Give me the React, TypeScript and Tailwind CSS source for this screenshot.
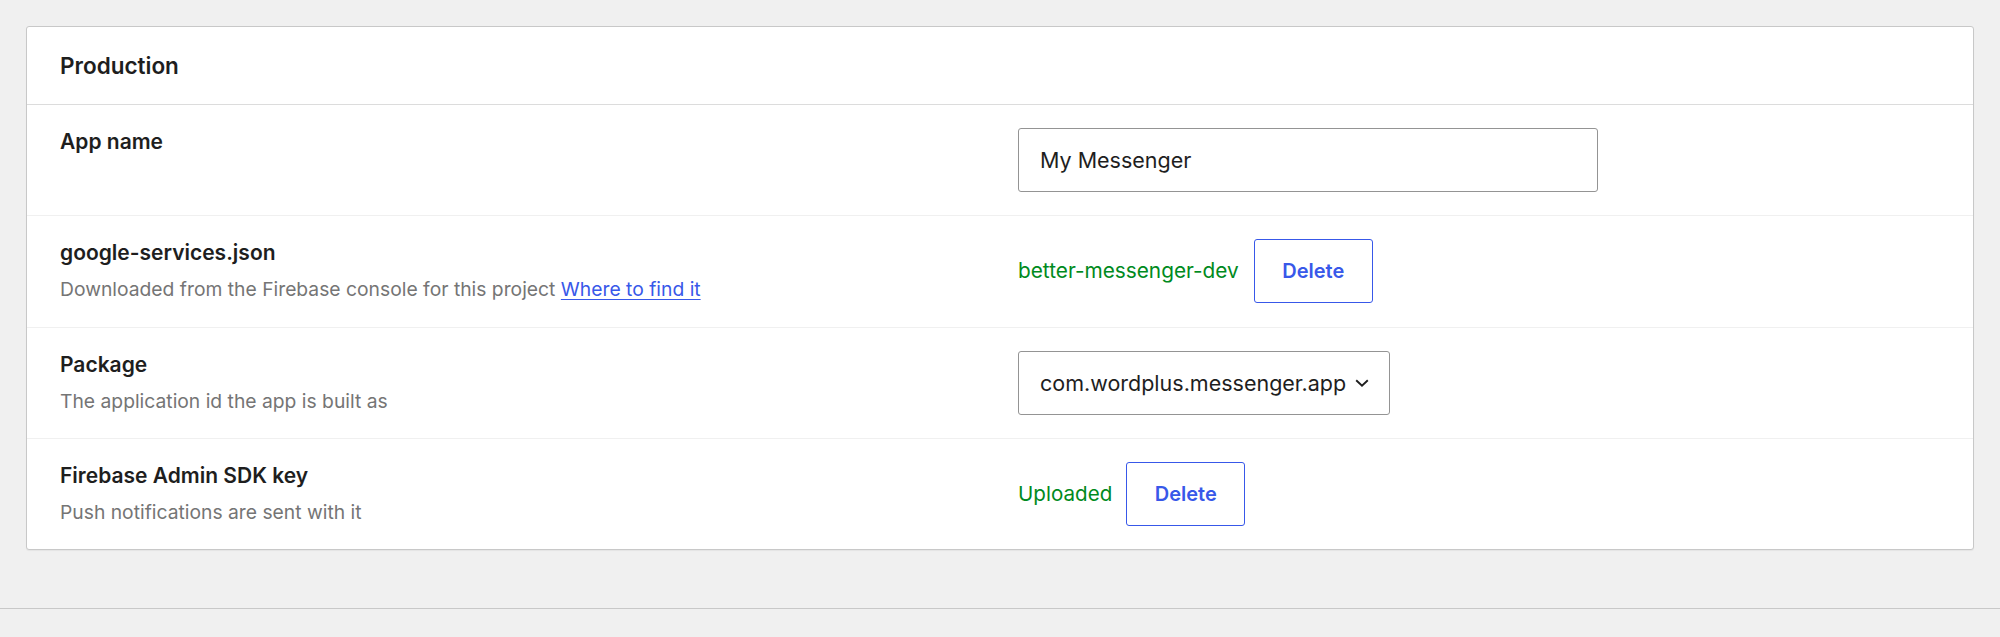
import React from "react";

const rows = [
  { id: "name", title: "App name" },
  { id: "services", title: "google-services.json" },
  { id: "package", title: "Package", hint: "The application id the app is built as" },
  { id: "admin", title: "Firebase Admin SDK key", hint: "Push notifications are sent with it" },
];

function DeleteButton() {
  return (
    <button className="h-[64px] w-[119px] rounded-[3px] border border-[#3858e9] bg-white text-[20px] font-semibold text-[#3858e9]">
      Delete
    </button>
  );
}

function Control({ id }: { id: string }) {
  if (id === "name") {
    return (
      <input
        defaultValue="My Messenger"
        className="h-[64px] w-[580px] rounded-[3px] border border-[#949494] bg-white px-[21px] text-[21.5px] text-[#1e1e1e] outline-none"
      />
    );
  }
  if (id === "services") {
    return (
      <div className="flex items-center gap-[15px]">
        <span className="text-[20.8px] text-[#008a20]">better-messenger-dev</span>
        <DeleteButton />
      </div>
    );
  }
  if (id === "package") {
    return (
      <div className="flex h-[64px] items-center rounded-[3px] border border-[#949494] bg-white pl-[21px] pr-[20px] text-[21.5px] text-[#1e1e1e]">
        <span>com.wordplus.messenger.app</span>
        <svg className="ml-[9px] h-[8px] w-[14px]" viewBox="0 0 14 8" fill="none">
          <path d="M1.2 1.2 L7 6.6 L12.8 1.2" stroke="#1e1e1e" strokeWidth="1.9" />
        </svg>
      </div>
    );
  }
  return (
    <div className="flex items-center gap-[14px]">
      <span className="text-[20.6px] text-[#008a20]">Uploaded</span>
      <DeleteButton />
    </div>
  );
}

export default function App() {
  return (
    <div className="min-h-[637px] bg-[#f0f0f0] pt-[26px] font-['Inter',sans-serif]">
      <div className="mx-[26px] rounded-[3px] border border-[#c8c8c8] bg-white shadow-[0_1px_1px_rgba(0,0,0,0.05)]">
        <div className="flex h-[78px] items-center border-b border-[#dcdcdc] px-[33px]">
          <h2 className="text-[22.5px] font-semibold text-[#1e1e1e]">Production</h2>
        </div>

        {rows.map((row, i) => (
          <div
            key={row.id}
            className={`grid grid-cols-2 gap-x-[36px] px-[33px] pt-[23px] ${i === 1 ? "pb-[24px]" : "pb-[23px]"} ${i > 0 ? "border-t border-[#f0f0f0]" : ""}`}
          >
            <div className="self-start">
              <div className="text-[21px] font-semibold leading-[28px] text-[#1e1e1e]">{row.title}</div>
              {row.id === "services" && (
                <div className="mt-[8px] text-[19.3px] leading-[28px] text-[#757575]">
                  Downloaded from the Firebase console for this project{" "}
                  <a href="#" className="text-[#3858e9] underline underline-offset-[3px]">
                    Where to find it
                  </a>
                </div>
              )}
              {row.hint && <div className="mt-[8px] text-[19.3px] leading-[28px] text-[#757575]">{row.hint}</div>}
            </div>
            <div className="flex h-[64px] items-center">
              <Control id={row.id} />
            </div>
          </div>
        ))}
      </div>

      <div className="mt-[58px] h-[28px] border-t border-[#c8c8c8]" />
    </div>
  );
}
